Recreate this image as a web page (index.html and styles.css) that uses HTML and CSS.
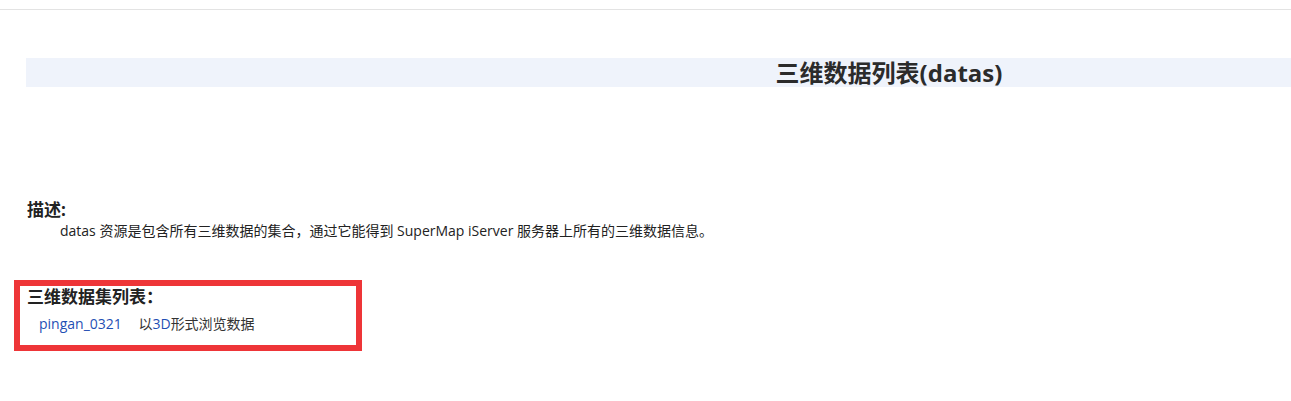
FILE: index.html
```html
<!DOCTYPE html>
<html lang="zh-CN">
<head>
  <meta charset="UTF-8">
  <title>三维数据列表(datas)</title>
  <link rel="stylesheet" href="styles.css">
</head>
<body>
  <div class="topline"></div>

  <!-- Title bar -->
  <div class="title-bar">
    <h1>三维数据列表(datas)</h1>
  </div>

  <!-- Description -->
  <div class="section desc">
    <h3>描述:</h3>
    <p>datas 资源是包含所有三维数据的集合，通过它能得到 SuperMap iServer 服务器上所有的三维数据信息。</p>
  </div>

  <!-- Dataset list -->
  <div class="marked">
    <h3>三维数据集列表：</h3>
    <div class="row">
      <a href="#">pingan_0321</a>
      <span class="view">以<a href="#">3D</a>形式浏览数据</span>
    </div>
  </div>
</body>
</html>
```

FILE: styles.css
```css
body {
  margin: 0;
  overflow: hidden;
  font-family: "Open Sans", "Noto Sans CJK SC", sans-serif;
  color: #333;
  background: #fff;
}
a {
  color: #1f4fb4;
  text-decoration: none;
}
.topline {
  height: 9px;
  border-bottom: 1px solid #e3e3e3;
}
/* Title bar styling */
.title-bar {
  margin: 48px 0 0 26px;
  width: 1726px;
  height: 29px;
  background: #eff3fb;
}
.title-bar h1 {
  margin: 0;
  text-align: center;
  font-size: 24px;
  line-height: 29px;
  font-weight: bold;
  color: #2b2b2b;
}
h3 {
  margin: 0;
  font-size: 17px;
  font-weight: bold;
  color: #222;
}
.desc {
  margin: 112px 0 0 27px;
}
.desc h3 {
  line-height: 22px;
}
.desc p {
  margin: 1px 0 0 33px;
  font-size: 14px;
  line-height: 18px;
  color: #222;
}
/* Annotated block */
.marked {
  margin: 40px 0 0 14px;
  width: 329px;
  height: 59px;
  border: 6px solid #ee3538;
  padding-left: 7px;
}
.marked h3 {
  line-height: 22px;
}
.row {
  margin: 7px 0 0 12px;
  font-size: 14px;
  line-height: 18px;
  color: #333;
}
.row .view {
  margin-left: 13px;
}
```
